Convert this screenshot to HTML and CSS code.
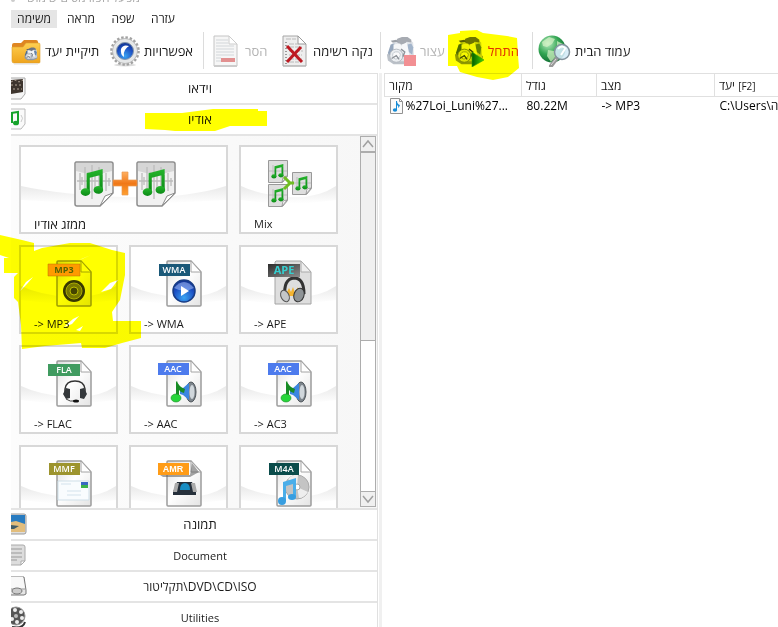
FILE: index.html
```html
<!DOCTYPE html>
<html lang="he">
<head>
<meta charset="utf-8">
<title>מפעל הפורמטים</title>
<link rel="stylesheet" href="styles.css">
</head>
<body>
<svg class="defs" aria-hidden="true">
  <defs>
    <linearGradient id="paper" x1="0" y1="0" x2="1" y2="1"><stop offset="0" stop-color="#dcdcdc"/><stop offset=".45" stop-color="#fff"/><stop offset="1" stop-color="#e4e4e4"/></linearGradient>
    <linearGradient id="swoosh" x1="0" y1="0" x2="0" y2="1"><stop offset="0" stop-color="#e9e9e9"/><stop offset="1" stop-color="#fff"/></linearGradient>
    <linearGradient id="gold" x1="0" y1="0" x2="0" y2="1"><stop offset="0" stop-color="#ffd052"/><stop offset="1" stop-color="#eea31c"/></linearGradient>
    <linearGradient id="plusFill" x1="0" y1="0" x2="0" y2="1"><stop offset="0" stop-color="#ffb060"/><stop offset=".5" stop-color="#f07818"/><stop offset="1" stop-color="#ffa030"/></linearGradient>
    <linearGradient id="note" x1="0" y1="0" x2="0" y2="1"><stop offset="0" stop-color="#25b52c"/><stop offset="1" stop-color="#0b8a16"/></linearGradient>
    <linearGradient id="go" x1="0" y1="0" x2="1" y2="0"><stop offset="0" stop-color="#045c05"/><stop offset="1" stop-color="#45d81f"/></linearGradient>
    <linearGradient id="tape" x1="0" y1="0" x2="1" y2="1"><stop offset="0" stop-color="#2c2c2c"/><stop offset="1" stop-color="#8c8c8c"/></linearGradient>
    <radialGradient id="blue" cx=".5" cy=".8" r=".8"><stop offset="0" stop-color="#3ba4f2"/><stop offset=".6" stop-color="#1c50c4"/><stop offset="1" stop-color="#12318c"/></radialGradient>
    <radialGradient id="globe" cx=".35" cy=".3" r=".8"><stop offset="0" stop-color="#b9ecc0"/><stop offset=".5" stop-color="#32a552"/><stop offset="1" stop-color="#08602a"/></radialGradient>
    <symbol id="swish" viewBox="0 0 100 20" preserveAspectRatio="none"><path d="M0 1Q20 10 50 12T100 1V15Q50 22 0 15Z" fill="url(#swoosh)"/></symbol>
    <symbol id="doc" viewBox="0 0 48 48"><path d="M13 2h23l10 11v33q0 1-1 1H13q-1 0-1-1V3q0-1 1-1z" fill="url(#paper)" stroke="#9c9c9c" stroke-width="1.5"/><path d="M36 2v11h10z" fill="#fff" stroke="#a4a4a4"/></symbol>
    <symbol id="notes" viewBox="0 0 24 28"><path d="M6 5l15-4v5L9 9zM6 5h3v17H6zM18 3h3v17h-3z" fill="url(#note)"/><ellipse cx="5" cy="22.500" rx="4.500" ry="3.600" fill="url(#note)"/><ellipse cx="17" cy="20.500" rx="4.500" ry="3.600" fill="url(#note)"/></symbol>
    <symbol id="wavepage" viewBox="0 0 40 46"><path d="M2 1h35q2 0 2 2v29L26 45H3q-2 0-2-2V2z" fill="#f1f1f1" stroke="#8d8d8d" stroke-width="1.500"/><path d="M2 2h36v8Q20 16 2 10z" fill="#d6d6d6"/><path d="M3 20h34M6 12v17M8 16v8M11 6v26M14 11v20M18 4v34M21 14v15M25 6v27M28 10v20M32 12v18M35 17v8" stroke="#bcbcbc" stroke-width="1.300"/><path d="M39 32l-8 3-5 10z" fill="#fff" stroke="#8b8b8b"/><use href="#notes" x="6" y="7" width="26" height="30"/></symbol>
    <symbol id="machine" viewBox="0 0 32 32"><path d="M1 20l3-3h23l4 5-2 5-8 3H8l-6-4z" fill="#8f98a5"/><path d="M5 10l3-4 7-3h9l5 4 1 17-8 3H10l-6-4z" fill="#cbd1d9"/><path d="M12 3l5-2h6l4 3v3l-5-1-2 3h-5l-4-3z" fill="#6d7480"/><path d="M5 5l6-1 2 2-6 1z" fill="#59606b"/><path d="M5 9l4-1 1 8-6 5-2-3z" fill="#4f6c90"/><path d="M23 9l4-1 2 4-1 8-5-4z" fill="#6683a8"/><path d="M8 9l7-1 3 5-5 4-5-1z" fill="#f1f3f5"/><path d="M17 9l5-2 2 8 1 7-5-1-4-6z" fill="#f3f5f7"/><circle cx="11" cy="21" r="7" fill="#dfe3e8" stroke="#7e8793"/><path d="M7 21q0-5 6-4 4 2 1 6-5 4-7-2z" fill="#f7f8f9" stroke="#9aa3ae"/><path d="M6 24l5-3 3 4M16 14l4 3-2 5" fill="none" stroke="#434b56" stroke-width="1.500"/></symbol>
    <symbol id="speaker" viewBox="0 0 48 48"><use href="#doc"/><ellipse cx="36" cy="33" rx="5" ry="10" fill="#7d858c" stroke="#4c5359"/><ellipse cx="37" cy="33" rx="2.500" ry="7" fill="#d0d7dc"/><path d="M25 30l3-1 6-5v17l-6-5-3-1z" fill="#3c86e0"/><path d="M21 23l1-1q1 5 8 8l-1 4q-4-1-5-3v9h-3z" fill="#168b24"/><ellipse cx="21" cy="39" rx="5" ry="4" fill="#27d63b" stroke="#158a24" stroke-width=".6"/></symbol>
    <symbol id="smallpage" viewBox="0 0 20 23"><path d="M.5.5h19v16l-5 6H.5z" fill="#dedede" stroke="#999"/><path d="M1 11h18M5 5v12M15 4v12" stroke="#bcbcbc"/><path d="M19 16l-4 1-1 5z" fill="#fff" stroke="#888" stroke-width=".7"/><use href="#notes" x="3" y="3" width="14" height="17"/></symbol>
  </defs>
</svg>

<header>
  <div class="title"><span class="title-icon"></span><span>מפעל הפורמטים שימוש</span></div>
  <nav class="menu">
    <button class="active">משימה</button><button>מראה</button><button>שפה</button><button>עזרה</button>
  </nav>
  <div class="toolbar">
    <button class="tool"><svg class="tool-icon" viewBox="0 0 30 32"><path d="M1 10q0-2 2-2h7l3-3h12q2 0 2 2v14H1z" fill="#df8622"/><path d="M1 12h11l3-4h13q1 0 1 2v17q0 1-1 1H3q-2 0-2-2z" fill="url(#gold)" stroke="#dda02c" stroke-width=".6"/><path d="M3 29h24" stroke="#ddd"/><use href="#machine" x="13" y="12" width="14" height="14"/></svg><span>תיקיית יעד</span></button>
    <button class="tool"><svg class="tool-icon" viewBox="0 0 30 32"><ellipse cx="15" cy="30" rx="11" ry="1.500" fill="#ddd"/><circle cx="15" cy="16" r="13.300" fill="none" stroke="#a2a2a2" stroke-width="3" stroke-dasharray="2.400 1.780"/><circle cx="15" cy="16" r="12.500" fill="#e5e7e8" stroke="#aaa" stroke-width=".7"/><circle cx="15" cy="16" r="8.500" fill="url(#blue)" stroke="#8598ad"/><path d="M19 11q-6-2-8 3-1 5 3 8-1-4 1-7 2-3 4-4z" fill="#fff"/></svg><span>אפשרויות</span></button>
    <i class="sep"></i>
    <button class="tool" disabled><svg class="tool-icon" viewBox="0 0 30 32"><path d="M3 1h15l8 8v22H3z" fill="#f6f6f6" stroke="#c4c4c4"/><path d="M18 1v8h8z" fill="#fff" stroke="#ccc"/><path d="M5 5h12M5 8h12M5 11h18M5 14h18M5 17h18M5 20h18M5 23h5M5 26h5" stroke="#d2d6d9"/><path d="M10 23h14v4H10z" fill="#e29090"/><path d="M3 31h23" stroke="#ccc" stroke-width="2"/></svg><span>הסר</span></button>
    <button class="tool"><svg class="tool-icon" viewBox="0 0 30 32"><path d="M4 1h15l8 8v22H4z" fill="#eee" stroke="#a6a6a6"/><path d="M19 1v8h8z" fill="#fff" stroke="#999"/><path d="M7 4h10M10 9h9M10 12h13M10 16h14M10 20h13M10 24h13M10 27h10" stroke="#bababa" stroke-dasharray="5 1"/><path d="M7 7v22" stroke="#444" stroke-dasharray="1 2"/><path d="M8 11l15 16M22 12L8 27" stroke="#bd1921" stroke-width="3"/><path d="M4 31h23" stroke="#bbb"/></svg><span>נקה רשימה</span></button>
    <i class="sep"></i>
    <button class="tool" disabled><svg class="tool-icon" viewBox="0 0 30 32"><g opacity=".6"><use href="#machine" x="0" y="1" width="30" height="30"/></g><path d="M18 20h12v11H18z" fill="#f28f93"/></svg><span>עצור</span></button>
    <button class="tool start"><svg class="tool-icon" viewBox="0 0 30 32"><use href="#machine" x="0" y="1" width="30" height="30"/><path d="M18 17v15l12-7z" fill="url(#go)" stroke="#36a526" stroke-width=".6"/></svg><span>התחל</span></button>
    <i class="sep"></i>
    <button class="tool"><svg class="tool-icon wide" viewBox="0 0 33 32"><circle cx="14" cy="14" r="13.500" fill="url(#globe)"/><path d="M4 7l7-5 6 2-3 5-5 3-4-1zM10 15l6 1 2 5-5 6-4-6zM19 6l6 3-1 5-5-1z" fill="#d8f3c7" opacity=".7"/><path d="M19 23l-6 8" stroke="#999" stroke-width="4" stroke-linecap="round"/><path d="M18 24l-5 6" stroke="#ddd"/><circle cx="24" cy="17" r="7.500" fill="#d4ebf7" fill-opacity=".9" stroke="#83939d" stroke-width="1.500"/><path d="M20 14q4-5 8 0M23 20l4-6" fill="none" stroke="#fff" stroke-width="2"/></svg><span>עמוד הבית</span></button>
  </div>
</header>

<main>
  <section class="side">
    <button class="category he"><svg class="cat-icon" viewBox="0 0 16 24"><path d="M-1 2h15v16l-4 5H-1z" fill="#f5f5f5" stroke="#aaa"/><path d="M0 4l12-1v13l-12 2z" fill="#3d342d"/><path d="M0 6l4-2 4 2 4-2M0 9h11M2 13h9" stroke="#b5a698" fill="none" stroke-dasharray="2 2"/></svg>וידאו</button>
    <button class="category he"><svg class="cat-icon" viewBox="0 0 16 24"><path d="M-1 2h15v15l-4 5H-1z" fill="#fafafa" stroke="#bbb"/><path d="M0 6l7-1v11M1 5v11" fill="none" stroke="#15a32b" stroke-width="2"/><ellipse cx="5" cy="16" rx="3" ry="2.300" fill="#15a32b"/><path d="M10 8q3 3 0 7" fill="none" stroke="#ccc"/></svg>אודיו</button>
    <div class="panel">
      <div class="cards">
        <button class="card double"><svg class="swish"><use href="#swish"/></svg><svg class="icon pair" viewBox="0 0 104 48"><use href="#wavepage" x="2" y="2" width="40" height="46"/><use href="#wavepage" x="64" y="2" width="40" height="46"/><path d="M50 13h6v8h9v6h-9v9h-6v-9h-9v-6h9z" fill="url(#plusFill)" stroke="#e99850" stroke-width=".7"/></svg><span class="he">ממזג אודיו</span></button>
        <button class="card"><svg class="swish"><use href="#swish"/></svg><svg class="icon" viewBox="0 0 48 48"><use href="#smallpage" x="3" y="1" width="20" height="23"/><use href="#smallpage" x="3" y="25" width="20" height="23"/><use href="#smallpage" x="27" y="13" width="20" height="23"/><path d="M19 18l6 6-6 6M25 24h4" fill="none" stroke="#70bd22" stroke-width="3"/></svg><span>Mix</span></button>
        <button class="card"><svg class="swish"><use href="#swish"/></svg><svg class="icon" viewBox="0 0 48 48"><use href="#doc"/><circle cx="29" cy="32" r="11" fill="#383838"/><circle cx="29" cy="32" r="8" fill="#777" stroke="#aaa"/><circle cx="29" cy="32" r="4" fill="#444" stroke="#bbb"/><path d="M3 5h32v12H3z" fill="#ff9a1a" stroke="#b87018" stroke-width=".5"/><text class="tag mp3" x="19" y="14">MP3</text></svg><span>-&gt; MP3</span></button>
        <button class="card"><svg class="swish"><use href="#swish"/></svg><svg class="icon" viewBox="0 0 48 48"><use href="#doc"/><circle cx="29" cy="32" r="11" fill="url(#blue)" stroke="#183c85" stroke-width="1.500"/><path d="M19 29q10-12 20 0-10 5-20 0" fill="#b6ccff" opacity=".5"/><path d="M26 27v10l8-5z" fill="#fff"/><path d="M4 5h31v12H4z" fill="#1a5878"/><text class="tag" x="19" y="14">WMA</text></svg><span>-&gt; WMA</span></button>
        <button class="card"><svg class="swish"><use href="#swish"/></svg><svg class="icon" viewBox="0 0 48 48"><path d="M11 2h25l10 11v32H10V3z" fill="#dedede" stroke="#a4a4a4"/><path d="M36 2v11h10z" fill="#eee" stroke="#aaa"/><path d="M20 38Q18 20 29 19q10 0 10 16" fill="none" stroke="#333" stroke-width="3"/><path d="M21 35l3-6 2 4 2-5 2 6 3-6v9H22z" fill="#f4b431"/><ellipse cx="20" cy="37" rx="4" ry="6" fill="#c4c7c9" stroke="#555" transform="rotate(-25 20 37)"/><ellipse cx="34" cy="36" rx="5" ry="7" fill="#8e9396" stroke="#333" transform="rotate(20 34 36)"/><path d="M3 5h32v13H3z" fill="url(#tape)"/><text class="tag ape" x="19" y="15">APE</text></svg><span>-&gt; APE</span></button>
        <button class="card"><svg class="swish"><use href="#swish"/></svg><svg class="icon" viewBox="0 0 48 48"><use href="#doc"/><path d="M20 35v-5q1-8 10-8t10 8v5" fill="none" stroke="#333" stroke-width="1.500"/><path d="M21 29l4 1v9l-4 1-3-5zM39 29l-4 1v9l4 1 3-5z" fill="#34383b"/><path d="M21 40q4 3 9 2" fill="none" stroke="#444"/><ellipse cx="31" cy="42" rx="3" ry="1.500" fill="#111"/><path d="M3 5h32v12H3z" fill="#409b60"/><text class="tag" x="19" y="14">FLA</text></svg><span>-&gt; FLAC</span></button>
        <button class="card"><svg class="swish"><use href="#swish"/></svg><svg class="icon" viewBox="0 0 48 48"><use href="#speaker"/><path d="M3 4h31v12H3z" fill="#4d7bed"/><text class="tag" x="18" y="13">AAC</text></svg><span>-&gt; AAC</span></button>
        <button class="card"><svg class="swish"><use href="#swish"/></svg><svg class="icon" viewBox="0 0 48 48"><use href="#speaker"/><path d="M3 4h31v12H3z" fill="#4d7bed"/><text class="tag" x="18" y="13">AAC</text></svg><span>-&gt; AC3</span></button>
        <button class="card"><svg class="swish"><use href="#swish"/></svg><svg class="icon" viewBox="0 0 48 48"><use href="#doc"/><path d="M13 22h31v19H13z" fill="#f9fcfe" stroke="#cfdfe8"/><path d="M22 32h14M22 36h14M16 25h10" stroke="#d3e2ec"/><path d="M36 23h7v6h-7z" fill="#3768c2"/><path d="M36 26h7v3h-7z" fill="#3ab34a"/><path d="M4 4h31v12H4z" fill="#9d942e"/><text class="tag" x="19" y="13">MMF</text></svg></button>
        <button class="card"><svg class="swish"><use href="#swish"/></svg><svg class="icon" viewBox="0 0 48 48"><use href="#doc"/><path d="M5 16h30l2-12 7 9-9 5H8z" fill="#666" opacity=".6"/><path d="M22 23h15l4 10v3H18v-3z" fill="#26303b"/><path d="M20 24h4l-2 9h-4zM36 24h4l2 9h-4z" fill="#aaa"/><path d="M25 31q0-7 5-7t5 7z" fill="#188dc3"/><path d="M3 4h31v12H3z" fill="#ff9c17"/><text class="tag arial" x="18" y="13">AMR</text></svg></button>
        <button class="card"><svg class="swish"><use href="#swish"/></svg><svg class="icon" viewBox="0 0 48 48"><use href="#doc"/><circle cx="32" cy="28" r="12" fill="#c4c4c4" stroke="#aaa"/><path d="M32 28l-9-8q5-5 10-4zM32 28l11 5q-4 6-9 6z" fill="#eee"/><circle cx="32" cy="28" r="3" fill="#fff" stroke="#aaa"/><path d="M18 23l13-4v19h-3V25l-7 2v15h-3z" fill="#4baee9"/><ellipse cx="17" cy="42" rx="4" ry="4" fill="#389ee0"/><ellipse cx="27" cy="38" rx="4" ry="3" fill="#389ee0"/><path d="M4 4h30v12H4z" fill="#0b4c4b"/><text class="tag" x="19" y="13">M4A</text></svg></button>
      </div>
      <div class="scroll">
        <button aria-label="Up"><svg viewBox="0 0 14 14"><path d="M2 10l5-6 5 6" fill="none" stroke="#a0a0a0" stroke-width="1.500"/></svg></button>
        <div class="thumb"></div><div class="track"></div>
        <button aria-label="Down"><svg viewBox="0 0 14 14"><path d="M2 4l5 6 5-6" fill="none" stroke="#a0a0a0" stroke-width="1.500"/></svg></button>
      </div>
    </div>
    <button class="category he"><svg class="cat-icon" viewBox="0 0 16 24"><path d="M-1 2h14q2 0 2 2v16q0 2-2 2H-1z" fill="#dedede" stroke="#999"/><path d="M0 3h14v9H0z" fill="#287bc0"/><path d="M0 10l5-1 9 3v8H0z" fill="#e2bd7c"/><path d="M0 13l8 1-5 3H0z" fill="#405c68"/></svg>תמונה</button>
    <button class="category latin"><svg class="cat-icon" viewBox="0 0 16 24"><path d="M-1 2h13q2 0 2 2v14l-4 4H-1z" fill="#ddd" stroke="#aaa"/><path d="M0 6h11M0 10h11M0 14h11M0 17h6" stroke="#999"/><path d="M14 18h-4v4z" fill="#fff" stroke="#aaa"/></svg>Document</button>
    <button class="category"><svg class="cat-icon" viewBox="0 0 16 24"><path d="M-1 3h14l2 13v4l-2 1H-1z" fill="#e6e6e6" stroke="#777"/><path d="M0 3h12l2 12H0z" fill="#f8f8f8"/><path d="M0 15h14" stroke="#999"/><ellipse cx="6" cy="17" rx="5" ry="3" fill="#ccc" stroke="#777"/></svg>תקליטור\DVD\CD\ISO</button>
    <button class="category latin"><svg class="cat-icon" viewBox="0 0 16 24"><path d="M1 22q11 2 13-5" fill="none" stroke="#333" stroke-width="2"/><circle cx="5" cy="11" r="9" fill="#555" stroke="#999"/><g fill="#eee"><circle cx="4" cy="5" r="2"/><circle cx="10" cy="7" r="2"/><circle cx="11" cy="13" r="2"/><circle cx="6" cy="17" r="2"/><circle cx="1" cy="14" r="2"/></g><circle cx="5" cy="11" r="2" fill="#bbb"/></svg>Utilities</button>
  </section>
  <div class="splitter"></div>
  <section class="tasks">
    <table>
      <colgroup><col class="c-source"><col class="c-size"><col class="c-state"><col></colgroup>
      <thead><tr><th>מקור</th><th>גודל</th><th>מצב</th><th>יעד <small>[F2]</small></th></tr></thead>
      <tbody><tr><td><span class="file"><svg viewBox="0 0 13 16"><path d="M.5.5h9l3 3v12H.5z" fill="#fafafa" stroke="#929292"/><path d="M9.500.5v3h3" fill="none" stroke="#929292"/><path d="M6 3h1q0 3 3 4-1 3-2 3 1-2-1-3v5H6z" fill="#168bd5"/><ellipse cx="5" cy="12" rx="2.200" ry="1.700" fill="#168bd5"/></svg>%27Loi_Luni%27...</span></td><td>80.22M</td><td>-&gt; MP3</td><td>C:\Users\ה</td></tr></tbody>
    </table>
  </section>
</main>

<svg class="marker" viewBox="0 0 778 627" aria-hidden="true">
  <path d="M448 35l12-2v-2l17-1 6 3 24 3 10 2 1 17 1 13-11 9-15 3-16-3-17-5-3-6h-9z"/>
  <path d="M145 113h37l31-4h45v2h9v15h-37l-15 5h-40l-10-1-20-1z"/>
  <path fill-rule="evenodd" d="M0 235l22 5 12 3v8l8-3 28-5h20l22 7 13 3v22l-5 25-8 12 1 9h28v17l-19 5-17 5H82l-1-5-36 3-23 3-1-24-3-23-4-4v-21l4-4H4v-15h5l-9-3zM20 291l6-9 7-5-6 7zM101 292l9-9 8-3-7 9zM64 327l9-8 6-3-7 8zM76 330l7-4-3 5zM79 260l12-5-9 4z"/>
</svg>
</body>
</html>
```

FILE: styles.css
```css
* { box-sizing: border-box; }
body {
  margin: 0;
  padding-left: 11px;
  height: 100vh;
  overflow: hidden;
  display: flex;
  flex-direction: column;
  position: relative;
  background: #fff;
  color: #1a1a1a;
  font-family: "Open Sans", "Liberation Sans", sans-serif;
  font-size: 12px;
}
button {
  margin: 0;
  padding: 0;
  border: 0;
  background: none;
  color: inherit;
  font: inherit;
}
.defs { position: absolute; width: 0; height: 0; }
.title {
  height: 10px;
  display: flex;
  align-items: flex-start;
  gap: 12px;
  color: #aaa;
  line-height: 16px;
}
.title span { margin-top: -10px; }
.title-icon { width: 4px; height: 12px; background: #ccc; border-radius: 2px; }
.menu { display: flex; height: 18px; }
.menu button { width: 46px; line-height: 18px; }
.menu button:nth-child(2) { width: 48px; }
.menu button:nth-child(3) { width: 36px; }
.menu button:nth-child(4) { width: 44px; }
.menu .active { background: #e5e5e5; }
.toolbar {
  display: grid;
  grid-template-columns: 99px 93px 8px 68px 101px 6px 68px 78px 6px auto;
  align-items: center;
  height: 45px;
  font-size: 13px;
}
.tool {
  display: flex;
  align-items: center;
  gap: 4px;
  white-space: nowrap;
}
.tool:disabled { color: #b4b4b4; }
.start { color: #e0312a; }
.tool-icon { width: 30px; height: 32px; flex: none; }
.tool-icon.wide { width: 33px; }
.sep { width: 1px; height: 37px; background: #dcdcdc; }
main { flex: 1; min-height: 0; display: grid; grid-template-columns: 367px 3px 1fr; column-gap: 1px; }
.side { border-top: 1px solid #e0e0e0; border-right: 1px solid #e0e0e0; min-height: 0; }
.category {
  display: block;
  position: relative;
  width: 100%;
  height: 31px;
  padding-left: 12px;
  border-bottom: 2px solid #e4e4e4;
  line-height: 29px;
  text-align: center;
}
.he { font-size: 13px; }
.latin { font-size: 11px; }
.cat-icon { position: absolute; left: 0; top: 2px; width: 16px; height: 24px; }
.panel {
  display: grid;
  grid-template-columns: 1fr 16px;
  height: 374px;
  padding-right: 1px;
  overflow: hidden;
  border-bottom: 2px solid #e4e4e4;
  background: linear-gradient(90deg, #fcfcfc, #f7f7f7);
}
.cards {
  display: grid;
  grid-template-columns: repeat(3, 99px);
  grid-auto-rows: 89px;
  gap: 11px;
  padding: 9px 8px;
  height: 372px;
  overflow: hidden;
}
.card {
  position: relative;
  display: flex;
  flex-direction: column;
  align-items: center;
  padding-top: 12px;
  border: 2px solid #d8d8d8;
  background: #fff;
}
.card.double { grid-column: span 2; }
.card span { align-self: flex-start; margin-left: 13px; line-height: 16px; margin-top: 9px; position: relative; }
.card span:not(.he) { font-size: 11px; }
.icon { width: 48px; height: 48px; position: relative; flex: none; }
.icon.pair { width: 104px; }
.swish { position: absolute; left: 0; top: 38px; width: 100%; height: 20px; }
.tag { font: 600 9px "Open Sans", sans-serif; fill: #fff; text-anchor: middle; }
.tag.mp3 { fill: #5566a0; font-weight: 700; }
.tag.ape { fill: #35cfd0; font-size: 11px; font-weight: 700; }
.tag.arial { font-family: "Liberation Sans", sans-serif; font-weight: 700; }
.scroll { display: grid; grid-template-rows: 16px 189px 1fr 16px; height: 371px; }
.scroll button, .thumb { border: 1px solid #adadad; background: #f0f0f0; }
.scroll button svg { display: block; width: 14px; height: 14px; }
.track { border: solid #adadad; border-width: 0 1px; background: #fff; }
.splitter { background: #f0f0f0; }
.tasks { min-width: 0; overflow: hidden; padding-left: 1px; }
table { width: 100%; table-layout: fixed; border-collapse: collapse; }
.c-source { width: 137px; }
.c-size { width: 75px; }
.c-state { width: 118px; }
th {
  height: 23px;
  padding: 0 4px;
  border: 1px solid #e0e0e0;
  border-right: 0;
  font-weight: 400;
  text-align: left;
}
th small { font-size: 10px; }
td { height: 18px; padding: 0 5px; white-space: nowrap; overflow: hidden; color: #000; }
.file { display: flex; align-items: center; gap: 3px; }
.file svg { width: 13px; height: 16px; flex: none; }
.marker { position: absolute; left: 0; top: 0; width: 778px; height: 627px; pointer-events: none; mix-blend-mode: multiply; fill: #ff0; }
```
